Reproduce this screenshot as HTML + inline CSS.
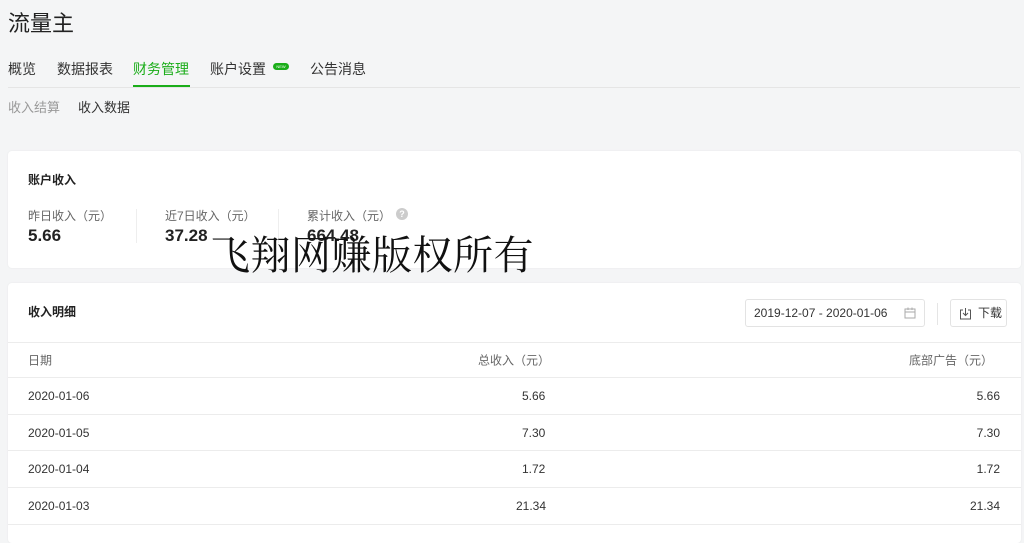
<!DOCTYPE html>
<html><head><meta charset="utf-8"><style>
*{margin:0;padding:0;box-sizing:border-box}
body{width:1024px;height:524px;overflow:hidden;background:#f4f5f6;font-family:"Liberation Sans","Noto Sans CJK SC",sans-serif;color:#333;position:relative}
.abs{position:absolute;white-space:nowrap}
.card{position:absolute;left:8px;width:1013px;background:#fff;border-radius:4px;box-shadow:0 0 2px rgba(0,0,0,.06)}
.row{position:absolute;left:0;right:0;border-bottom:1px solid #ececec;font-size:12px;color:#333}
.row span{position:absolute;top:50%;transform:translateY(-50%)}
</style></head><body>
<div class="abs" style="left:8px;top:6px;font-size:22px;color:#222">流量主</div>
<div class="abs" style="left:8px;top:59px;font-size:14px;color:#333">概览</div>
<div class="abs" style="left:57px;top:59px;font-size:14px;color:#333">数据报表</div>
<div class="abs" style="left:133px;top:59px;font-size:14px;color:#1aad19">财务管理</div>
<div class="abs" style="left:133px;top:85px;width:57px;height:3px;background:#1aad19"></div>
<div class="abs" style="left:210px;top:59px;font-size:14px;color:#333">账户设置</div>
<div class="abs" style="left:273px;top:63px;width:16px;height:7px;border-radius:4px;background:#1aad19;font-size:4px;color:#fff;text-align:center;line-height:7px">NEW</div>
<div class="abs" style="left:310px;top:59px;font-size:14px;color:#333">公告消息</div>
<div class="abs" style="left:8px;top:87px;width:1012px;height:1px;background:#e5e5e5"></div>
<div class="abs" style="left:8px;top:97px;font-size:13px;color:#999">收入结算</div>
<div class="abs" style="left:78px;top:97px;font-size:13px;color:#333">收入数据</div>

<div class="card" style="top:151px;height:117px">
<div class="abs" style="left:20px;top:20px;font-size:12px;font-weight:bold;color:#222">账户收入</div>
<div class="abs" style="left:20px;top:56px;font-size:12px;color:#666">昨日收入（元）</div>
<div class="abs" style="left:20px;top:75px;font-size:17px;font-weight:bold;color:#222">5.66</div>
<div class="abs" style="left:128px;top:58px;width:1px;height:34px;background:#eee"></div>
<div class="abs" style="left:157px;top:56px;font-size:12px;color:#666">近7日收入（元）</div>
<div class="abs" style="left:157px;top:75px;font-size:17px;font-weight:bold;color:#222">37.28</div>
<div class="abs" style="left:270px;top:58px;width:1px;height:34px;background:#eee"></div>
<div class="abs" style="left:299px;top:56px;font-size:12px;color:#666">累计收入（元）</div>
<div class="abs" style="left:388px;top:57px;width:12px;height:12px;border-radius:50%;background:#ccc;color:#fff;font-size:9px;text-align:center;line-height:12px;font-weight:bold">?</div>
<div class="abs" style="left:299px;top:75px;font-size:17px;font-weight:bold;color:#222">664.48</div>
</div>

<div class="card" style="top:283px;height:260px">
<div class="abs" style="left:20px;top:20px;font-size:12px;font-weight:bold;color:#222">收入明细</div>
<div class="abs" style="left:737px;top:16px;width:180px;height:28px;border:1px solid #e3e3e3;border-radius:3px;font-size:12px;color:#333;line-height:26px;padding-left:8px">2019-12-07 - 2020-01-06
<svg style="position:absolute;right:8px;top:7px" width="12" height="12" viewBox="0 0 12 12"><rect x="1" y="2" width="10" height="9" fill="none" stroke="#aaa"/><line x1="1" y1="5" x2="11" y2="5" stroke="#aaa"/><line x1="4" y1="0.5" x2="4" y2="3" stroke="#aaa"/><line x1="8" y1="0.5" x2="8" y2="3" stroke="#aaa"/></svg></div>
<div class="abs" style="left:929px;top:20px;width:1px;height:22px;background:#e5e5e5"></div>
<div class="abs" style="left:942px;top:16px;width:57px;height:28px;border:1px solid #e3e3e3;border-radius:3px;font-size:12px;color:#333;line-height:26px;padding-left:27px">下载
<svg style="position:absolute;left:8px;top:7px" width="13" height="13" viewBox="0 0 13 13"><path d="M4 3H1.5v9h10V3H9M6.5 1v7M4 6l2.5 2.5L9 6" fill="none" stroke="#555"/></svg></div>
<div class="row" style="top:59px;height:1px;background:#ececec"></div>
<div class="row" style="top:60px;height:35px;color:#666"><span style="left:20px">日期</span><span style="left:470px">总收入（元）</span><span style="right:28px">底部广告（元）</span></div>
<div class="row" style="top:95px;height:37px"><span style="left:20px">2020-01-06</span><span style="left:514px">5.66</span><span style="right:21px">5.66</span></div>
<div class="row" style="top:132px;height:36px"><span style="left:20px">2020-01-05</span><span style="left:514px">7.30</span><span style="right:21px">7.30</span></div>
<div class="row" style="top:168px;height:37px"><span style="left:20px">2020-01-04</span><span style="left:514px">1.72</span><span style="right:21px">1.72</span></div>
<div class="row" style="top:205px;height:37px"><span style="left:20px">2020-01-03</span><span style="left:508px">21.34</span><span style="right:21px">21.34</span></div>
</div>

<div class="abs" style="left:210px;top:224px;font-size:40px;letter-spacing:0.5px;font-family:'Noto Serif CJK SC',serif;color:#111">飞翔网赚版权所有</div>
</body></html>
